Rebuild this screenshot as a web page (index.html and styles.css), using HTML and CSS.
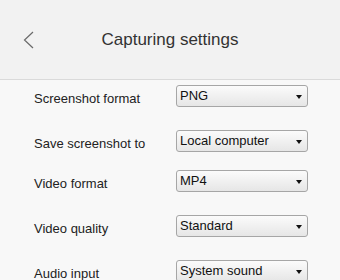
FILE: index.html
```html
<!doctype html>
<html lang="en">
  <head>
    <meta charset="utf-8" />
    <meta name="viewport" content="width=device-width, initial-scale=1" />
    <title>Capturing settings</title>
    <link rel="stylesheet" href="styles.css">
  </head>
  <body>
    <header class="topbar">
      <button class="back" type="button" aria-label="Back">
        <svg width="11" height="18" viewBox="0 0 11 18">
          <polyline points="10,1 1.5,9 10,17" fill="none" stroke="#6a6a6a" stroke-width="1.2" />
        </svg>
      </button>
      <h1>Capturing settings</h1>
    </header>

    <main class="settings">
      <div class="row">
        <label for="shot-format">Screenshot format</label>
        <div class="select">
          <select id="shot-format">
            <option>PNG</option>
            <option>JPG</option>
          </select>
        </div>
      </div>
      <div class="row row--tight">
        <label for="shot-dest">Save screenshot to</label>
        <div class="select">
          <select id="shot-dest">
            <option>Local computer</option>
            <option>Clipboard</option>
          </select>
        </div>
      </div>
      <div class="row">
        <label for="video-format">Video format</label>
        <div class="select">
          <select id="video-format">
            <option>MP4</option>
            <option>WebM</option>
          </select>
        </div>
      </div>
      <div class="row">
        <label for="video-quality">Video quality</label>
        <div class="select">
          <select id="video-quality">
            <option>Standard</option>
            <option>High</option>
          </select>
        </div>
      </div>
      <div class="row">
        <label for="audio-input">Audio input</label>
        <div class="select">
          <select id="audio-input">
            <option>System sound</option>
            <option>Microphone</option>
            <option>None</option>
          </select>
        </div>
      </div>
    </main>
  </body>
</html>
```

FILE: styles.css
```css
body {
  margin: 0;
  background: #f8f8f8;
  color: #222;
  font-family: "Liberation Sans", Arial, sans-serif;
}
.topbar {
  display: grid;
  grid-template-columns: 1fr auto 1fr;
  align-items: center;
  height: 79px;
  background: #f2f2f2;
  border-bottom: 1px solid #dadada;
  h1 {
    margin: 0;
    font-size: 17px;
    font-weight: normal;
    color: #333;
  }
}
.back {
  justify-self: start;
  display: flex;
  margin-left: 23px;
  padding: 0;
  border: none;
  background: none;
  cursor: pointer;
}
.settings {
  display: flex;
  flex-direction: column;
  gap: 23px;
  padding: 5px 0 0 34px;
}
.row {
  display: flex;
  height: 22px;
  label {
    width: 142px;
    padding-top: 7px;
    font-size: 13px;
    line-height: 14px;
  }
}
.row--tight {
  margin-bottom: -5px;
}
.select {
  position: relative;
  width: 132px;
  select {
    appearance: none;
    width: 100%;
    height: 22px;
    margin: 0;
    padding: 0 0 2px 3px;
    border: 1px solid #a6a6a6;
    border-radius: 3px;
    background: linear-gradient(#fbfbfb, #e6e6e6);
    font-family: "Liberation Sans", Arial, sans-serif;
    font-size: 13px;
    color: #111;
  }
}
.select::after {
  content: "";
  position: absolute;
  right: 6px;
  top: 10px;
  border-left: 3.5px solid transparent;
  border-right: 3.5px solid transparent;
  border-top: 4px solid #111;
  pointer-events: none;
}
```
